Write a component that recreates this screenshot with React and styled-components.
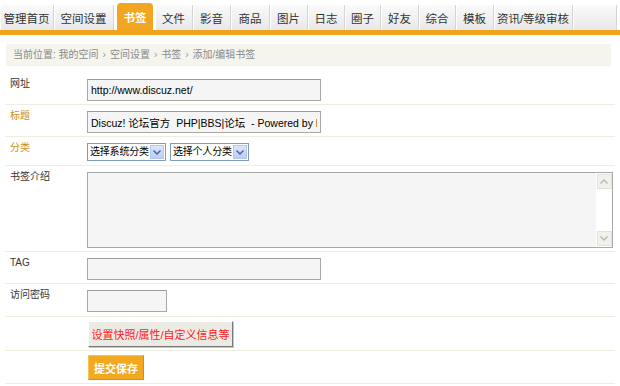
import React from 'react';
import styled, { createGlobalStyle } from 'styled-components';

const Global = createGlobalStyle`
  html, body { margin: 0; padding: 0; background: #fff; }
  body {
    font-size: 10px;
    font-family: "Liberation Sans", "Noto Sans CJK SC", sans-serif;
    color: #333;
  }
`;

const Page = styled.div`
  width: 620px;
  height: 386px;
  overflow: hidden;
`;

const Nav = styled.nav`
  display: flex;
  align-items: flex-end;
  height: 30px;
  border-bottom: 5px solid #f0a31d;
`;

const Tab = styled.a`
  flex: none;
  width: ${(p) => p.$w}px;
  height: 25px;
  box-sizing: border-box;
  display: flex;
  align-items: center;
  justify-content: center;
  background: linear-gradient(#fafafa, #e8e8e8);
  border-right: 1px solid #d4d4d4;
  box-shadow: inset 1px 0 #ffffff;
  color: #333;
  font-size: 11.5px;
  text-decoration: none;
  white-space: nowrap;
`;

const ActiveTab = styled(Tab)`
  height: 27px;
  margin: 0 2px 0 3px;
  background: #f1a520;
  border: none;
  border-radius: 4px 4px 0 0;
  box-shadow: none;
  color: #fff;
  font-weight: bold;
`;

const Crumbs = styled.div`
  margin: 9px 9px 0 6px;
  height: 22px;
  line-height: 22px;
  padding-left: 7px;
  background: #f5f5ee;
  color: #8a8a8a;
`;

const Sep = styled.span`
  margin: 0 4px;
  color: #999;
`;

const Form = styled.form`
  margin: 7px 5px 0 5px;
`;

const Row = styled.div`
  display: grid;
  grid-template-columns: 82px 1fr;
  border-bottom: 1px solid #eeeedf;
`;

const Label = styled.div`
  padding: 3px 0 0 5px;
  line-height: 16px;
  color: ${(p) => (p.$hl ? '#c98f26' : '#333')};
`;

const Field = styled.div`
  display: flex;
  align-items: flex-start;
  gap: 4px;
  padding: ${(p) => p.$pt ?? 6}px 0 ${(p) => p.$pb ?? 3}px 0;
`;

const TextInput = styled.input`
  width: ${(p) => p.$w}px;
  height: 22px;
  box-sizing: border-box;
  border: 1px solid #a8a8a8;
  border-top-color: #9a9a9a;
  background: #f5f5f5;
  padding: 0 3px;
  font: 10.5px "Liberation Sans", "Noto Sans CJK SC", sans-serif;
  color: #000;
  outline: none;
`;

const SelectBox = styled.div`
  width: 79px;
  height: 18px;
  box-sizing: border-box;
  border: 1px solid #7f9db9;
  background: #fff;
  display: flex;
  align-items: center;
  padding: 1px;
  gap: 1px;
`;

const SelectText = styled.span`
  flex: 1;
  padding-left: 1px;
  color: #000;
  font-size: 10px;
  letter-spacing: -0.2px;
  white-space: nowrap;
  overflow: hidden;
  line-height: 14px;
`;

const SelectArrow = styled.span`
  width: 14px;
  height: 14px;
  flex: none;
  box-sizing: border-box;
  background: linear-gradient(#dce6fd, #b9cdf8);
  border: 1px solid #b7c8f0;
  display: flex;
  align-items: center;
  justify-content: center;
`;

const AreaBox = styled.div`
  width: 526px;
  height: 76px;
  box-sizing: border-box;
  border: 1px solid #a8a8a8;
  display: flex;
  background: #f5f5f5;
`;

const Area = styled.textarea`
  flex: 1;
  border: none;
  resize: none;
  background: #f5f5f5;
  outline: none;
  padding: 2px;
  font: 10.5px "Liberation Sans", "Noto Sans CJK SC", sans-serif;
`;

const Track = styled.div`
  width: 16px;
  flex: none;
  background: #fff;
  display: flex;
  flex-direction: column;
  justify-content: space-between;
  align-items: center;
  padding: 1px 0;
`;

const TrackBtn = styled.div`
  width: 15px;
  height: 15px;
  box-sizing: border-box;
  background: #f2f2ec;
  border: 1px solid #e2e2da;
  display: flex;
  align-items: center;
  justify-content: center;
`;

const OptButton = styled.button`
  margin-left: 1px;
  width: 145px;
  height: 26px;
  box-sizing: border-box;
  background: #ebebe3;
  border: 1px solid;
  border-color: #ffffff #7a7a7a #7a7a7a #ffffff;
  box-shadow: 1px 1px 0 #c8c8c0;
  color: #ff1a1a;
  font: 11px "Liberation Sans", "Noto Sans CJK SC", sans-serif;
  white-space: nowrap;
  padding: 0;
`;

const Submit = styled.button`
  margin-left: 1px;
  width: 56px;
  height: 25px;
  box-sizing: border-box;
  background: #f3a91f;
  border: 1px solid #f8c05a;
  border-right-color: #d78d10;
  border-bottom-color: #d78d10;
  color: #fff;
  font: bold 11px "Liberation Sans", "Noto Sans CJK SC", sans-serif;
  white-space: nowrap;
  padding: 0;
`;

const Chevron = ({ up, color = '#4d6185' }) => (
  <svg width="8" height="5" viewBox="0 0 8 5">
    <path
      d={up ? 'M0.5 4.5 L4 1 L7.5 4.5' : 'M0.5 0.5 L4 4 L7.5 0.5'}
      fill="none"
      stroke={color}
      strokeWidth="1.4"
    />
  </svg>
);

const Select = ({ label }) => (
  <SelectBox>
    <SelectText>{label}</SelectText>
    <SelectArrow>
      <Chevron />
    </SelectArrow>
  </SelectBox>
);

const tabs = [
  { t: '管理首页', w: 54 },
  { t: '空间设置', w: 60 },
  { t: '书签', w: 36, active: true },
  { t: '文件', w: 38 },
  { t: '影音', w: 38 },
  { t: '商品', w: 39 },
  { t: '图片', w: 38 },
  { t: '日志', w: 37 },
  { t: '圈子', w: 36 },
  { t: '好友', w: 38 },
  { t: '综合', w: 37 },
  { t: '模板', w: 38 },
  { t: '资讯/等级审核', w: 79 },
  { t: '', w: 44 },
];

export default function App() {
  return (
    <Page>
      <Global />
      <Nav>
        {tabs.map((tab, i) =>
          tab.active ? (
            <ActiveTab key={i} $w={tab.w}>{tab.t}</ActiveTab>
          ) : (
            <Tab key={i} $w={tab.w}>{tab.t}</Tab>
          )
        )}
      </Nav>
      <Crumbs>
        当前位置: 我的空间<Sep>›</Sep>空间设置<Sep>›</Sep>书签<Sep>›</Sep>添加/编辑书签
      </Crumbs>
      <Form onSubmit={(e) => e.preventDefault()}>
        <Row>
          <Label>网址</Label>
          <Field>
            <TextInput $w={234} defaultValue="http://www.discuz.net/" />
          </Field>
        </Row>
        <Row>
          <Label $hl>标题</Label>
          <Field>
            <TextInput $w={234} defaultValue="Discuz! 论坛官方  PHP|BBS|论坛  - Powered by Discuz!" />
          </Field>
        </Row>
        <Row>
          <Label $hl>分类</Label>
          <Field $pb={4}>
            <Select label="选择系统分类" />
            <Select label="选择个人分类" />
          </Field>
        </Row>
        <Row>
          <Label>书签介绍</Label>
          <Field>
            <AreaBox>
              <Area />
              <Track>
                <TrackBtn><Chevron up color="#b8b8b0" /></TrackBtn>
                <TrackBtn><Chevron color="#b8b8b0" /></TrackBtn>
              </Track>
            </AreaBox>
          </Field>
        </Row>
        <Row>
          <Label>TAG</Label>
          <Field>
            <TextInput $w={234} />
          </Field>
        </Row>
        <Row>
          <Label>访问密码</Label>
          <Field $pb={4}>
            <TextInput $w={80} type="password" />
          </Field>
        </Row>
        <Row>
          <Label />
          <Field $pt={4}>
            <OptButton type="button">设置快照/属性/自定义信息等</OptButton>
          </Field>
        </Row>
        <Row>
          <Label />
          <Field $pt={4}>
            <Submit type="submit">提交保存</Submit>
          </Field>
        </Row>
      </Form>
    </Page>
  );
}
